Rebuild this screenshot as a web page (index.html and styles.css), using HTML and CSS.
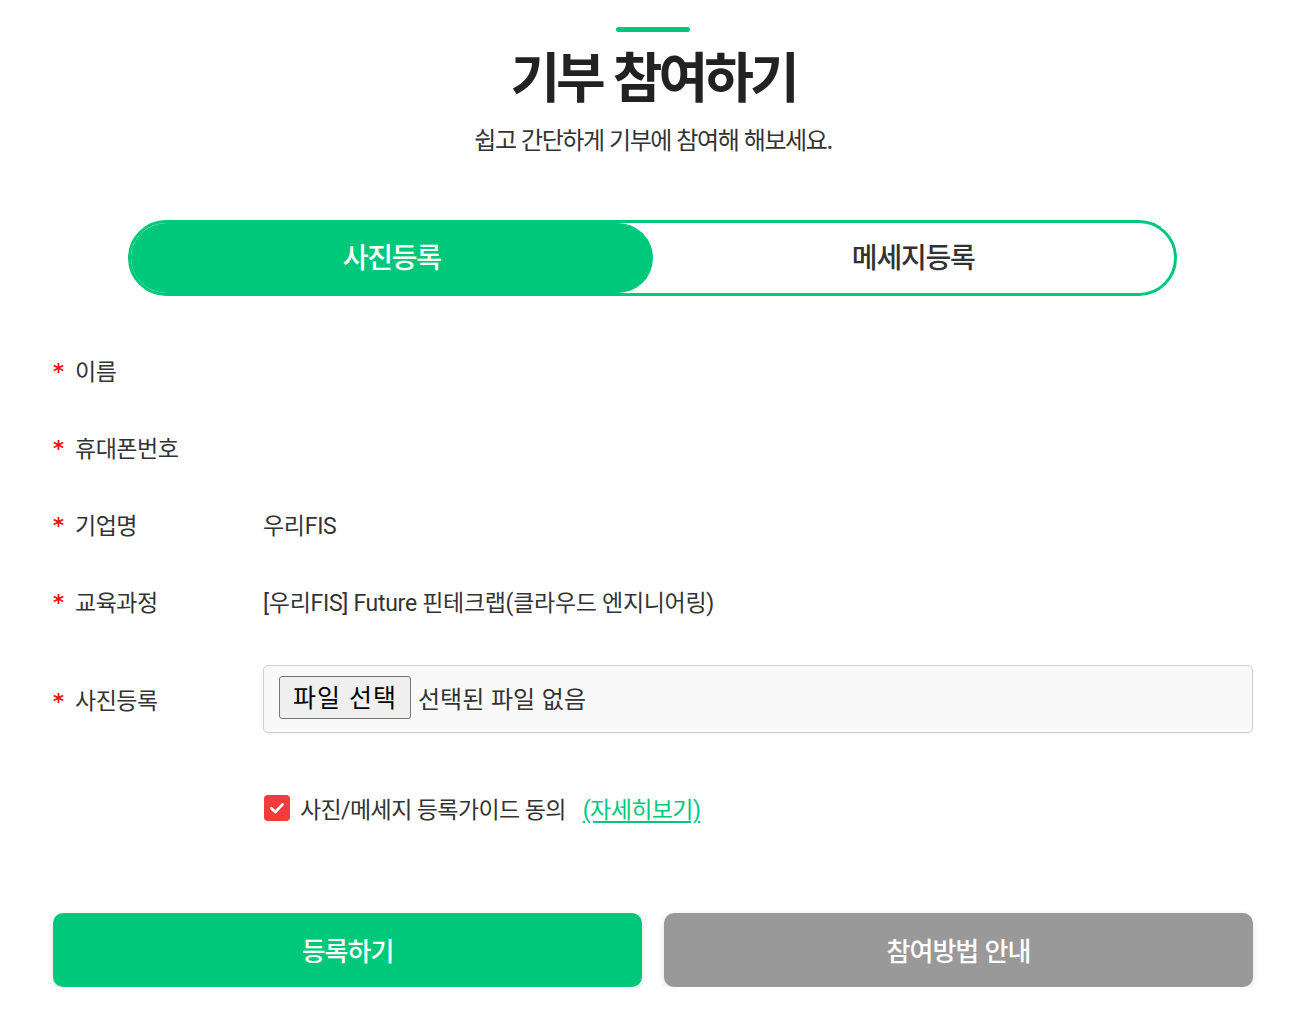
FILE: index.html
```html
<!DOCTYPE html>
<html lang="ko">
<head>
<meta charset="utf-8">
<title>기부 참여하기</title>
<link rel="stylesheet" href="styles.css">
</head>
<body>
<div class="page">
  <header class="head">
    <div class="head-bar"></div>
    <h1 class="title">기부 참여하기</h1>
    <p class="subtitle">쉽고 간단하게 기부에 참여해 해보세요.</p>
  </header>

  <div class="tabs">
    <div class="tab tab-active">사진등록</div>
    <div class="tab">메세지등록</div>
  </div>

  <div class="form">
    <div class="row">
      <div class="label"><span class="req">*</span>이름</div>
      <div class="value"></div>
    </div>
    <div class="row">
      <div class="label"><span class="req">*</span>휴대폰번호</div>
      <div class="value"></div>
    </div>
    <div class="row">
      <div class="label"><span class="req">*</span>기업명</div>
      <div class="value">우리FIS</div>
    </div>
    <div class="row">
      <div class="label"><span class="req">*</span>교육과정</div>
      <div class="value">[우리FIS] Future 핀테크랩(클라우드 엔지니어링)</div>
    </div>
    <div class="row row-file">
      <div class="label"><span class="req">*</span>사진등록</div>
      <div class="value">
        <div class="file-box">
          <span class="file-btn">파일 선택</span>
          <span class="file-name">선택된 파일 없음</span>
        </div>
      </div>
    </div>
    <div class="row row-agree">
      <div class="label"></div>
      <div class="value agree">
        <span class="check"><svg width="26" height="26" viewBox="0 0 26 26"><path d="M7.3 13.2l4 3.8 7.3-7.6" fill="none" stroke="#fff" stroke-width="2.8" stroke-linecap="round" stroke-linejoin="round"/></svg></span>
        <span class="agree-text">사진/메세지 등록가이드 동의</span>
        <a class="agree-link" href="#">(자세히보기)</a>
      </div>
    </div>
  </div>

  <div class="actions">
    <button class="btn btn-primary" type="button">등록하기</button>
    <button class="btn btn-gray" type="button">참여방법 안내</button>
  </div>
</div>
</body>
</html>
```

FILE: styles.css
```css
* { box-sizing: border-box; }
html, body { margin: 0; padding: 0; background: #fff; }
body {
  font-family: "Noto Sans CJK KR", "Noto Sans", sans-serif;
  color: #333;
}
.page {
  width: 1200px;
  margin: 0 0 0 53px;
  padding-top: 27px;
}
.head {
  display: flex;
  flex-direction: column;
  align-items: center;
}
.head-bar {
  width: 74px;
  height: 5px;
  border-radius: 3px;
  background: #00c87a;
}
.title {
  margin: 8px 0 0;
  font-size: 54px;
  line-height: 70px;
  font-weight: 700;
  color: #222;
  letter-spacing: -4px;
}
.subtitle {
  margin: 13px 0 0;
  font-size: 24px;
  line-height: 32px;
  letter-spacing: -1.4px;
  color: #333;
}
.tabs {
  margin: 65px 0 0 75px;
  width: 1049px;
  height: 76px;
  border: 3px solid #00c87a;
  border-radius: 38px;
  display: flex;
}
.tab {
  flex: 1;
  display: flex;
  align-items: center;
  justify-content: center;
  padding-bottom: 5px;
  font-size: 28px;
  font-weight: 500;
  letter-spacing: -1.2px;
  color: #333;
}
.tab-active {
  background: #00c87a;
  color: #fff;
  border-radius: 35px;
}
.form {
  margin-top: 35px;
  display: flex;
  flex-direction: column;
  font-family: Roboto, "Noto Sans CJK KR", sans-serif;
}
.row {
  display: flex;
  align-items: center;
  height: 77px;
}
.label {
  width: 210px;
  flex: none;
  font-size: 23px;
  color: #333;
  letter-spacing: -0.5px;
  display: flex;
  align-items: center;
}
.req {
  color: #f01010;
  font-family: "DejaVu Sans", sans-serif;
  font-size: 21px;
  font-weight: 700;
  width: 22px;
  padding-top: 5px;
}
.value {
  flex: 1;
  font-size: 23px;
  color: #333;
  letter-spacing: -0.3px;
}
.row-file {
  margin-top: 26px;
  height: 68px;
}
.file-box {
  height: 68px;
  border: 1px solid #cfcfcf;
  border-radius: 5px;
  background: #f9f9f9;
  display: flex;
  align-items: center;
  padding-left: 15px;
  padding-bottom: 4px;
  box-shadow: 0 1px 2px rgba(0,0,0,0.05);
}
.file-btn {
  height: 43px;
  padding: 0 13px 2px;
  border: 1px solid #767676;
  border-radius: 3px;
  background: #efefef;
  color: #000;
  font-family: "Noto Sans CJK KR", sans-serif;
  font-size: 25px;
  display: flex;
  align-items: center;
  letter-spacing: 1px;
}
.file-name {
  margin-left: 7px;
  font-family: "Noto Sans CJK KR", sans-serif;
  font-size: 24px;
  color: #333;
  letter-spacing: 0;
}
.row-agree {
  margin-top: 42px;
  height: 66px;
}
.agree {
  display: flex;
  align-items: center;
  letter-spacing: -0.6px;
}
.check {
  width: 26px;
  height: 26px;
  margin-left: 1px;
  border-radius: 4px;
  background: #f23b3b;
  display: flex;
  align-items: center;
  justify-content: center;
}
.agree-text {
  margin-left: 10px;
}
.agree-link {
  margin-left: 17px;
  color: #00c87a;
  text-decoration: underline;
  text-underline-offset: 3px;
}
.actions {
  margin-top: 72px;
  display: flex;
  gap: 22px;
}
.btn {
  flex: 1;
  height: 74px;
  border: 0;
  border-radius: 10px;
  font-family: inherit;
  font-size: 26px;
  font-weight: 500;
  letter-spacing: -1px;
  color: #fff;
  padding-bottom: 3px;
  box-shadow: 0 2px 6px rgba(0,0,0,0.12);
}
.btn-primary { background: #00c87a; }
.btn-gray { background: #999; }
```
